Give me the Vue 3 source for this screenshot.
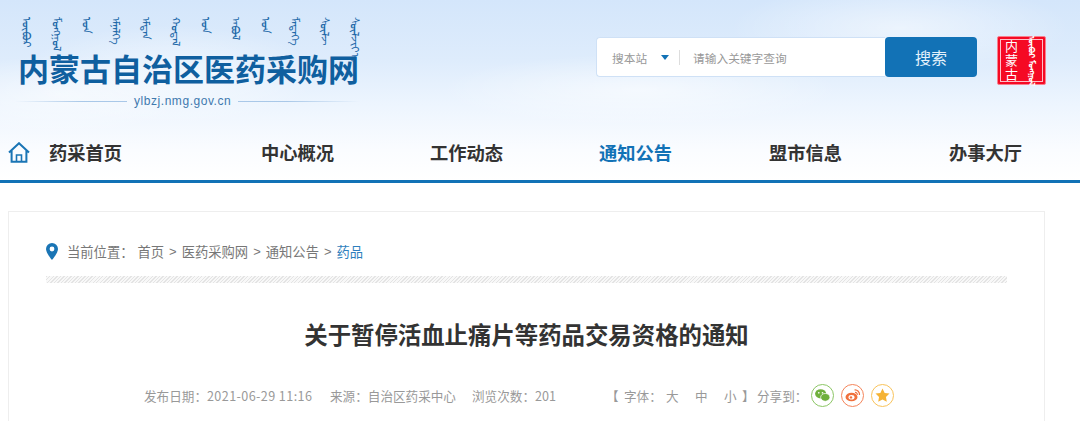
<script setup>
const navItems = [
  { label: '药采首页' },
  { label: '中心概况' },
  { label: '工作动态' },
  { label: '通知公告', active: true },
  { label: '盟市信息' },
  { label: '办事大厅' }
]

const crumbs = ['首页', '医药采购网', '通知公告']
const mongolWords = ['ᠥᠪᠥᠷ', 'ᠮᠣᠩᠭᠣᠯ', 'ᠤᠨ', 'ᠡᠮᠨᠡᠯᠭᠡ', 'ᠡᠮᠲᠠᠨ', 'ᠬᠤᠳᠠᠯ', 'ᠤᠨ', 'ᠠᠪᠤᠯ', 'ᠤᠨ', 'ᠮᠡᠳᠡᠭᠡ', 'ᠰᠦᠯᠵ', 'ᠰᠦᠯᠵᠢᠶ᠎ᠡ']
</script>

<template>
  <div class="page">
    <header class="header">
      <div class="top">
        <div class="logo">
          <div class="mongol">
            <span v-for="(word, i) in mongolWords" :key="i">{{ word }}</span>
          </div>
          <div class="site-name">内蒙古自治区医药采购网</div>
          <div class="site-url"><i></i><span>ylbzj.nmg.gov.cn</span><i></i></div>
        </div>
        <div class="search">
          <div class="search-box">
            <span class="scope">搜本站</span>
            <span class="caret"></span>
            <span class="divider"></span>
            <span class="placeholder">请输入关键字查询</span>
          </div>
          <button class="search-btn">搜索</button>
        </div>
        <div class="seal"><span class="seal-cn">内蒙古</span><span class="seal-mn">ᠥᠪᠥᠷ ᠮᠣᠩᠭᠣᠯ</span></div>
      </div>
      <nav class="nav">
        <svg class="home" viewBox="0 0 22 21" width="22" height="21">
          <path d="M1 10.500 11 1.200l10 9.300M3.600 8.600v11.200h14.800V8.600" fill="none" stroke="#1a75b5" stroke-width="2" />
          <path d="M8.500 19.500v-6.500h5v6.500" fill="none" stroke="#1a75b5" stroke-width="1.600" />
        </svg>
        <a v-for="item in navItems" :key="item.label" :class="{ active: item.active }">{{ item.label }}</a>
      </nav>
    </header>

    <main class="card">
      <div class="crumbs">
        <svg viewBox="0 0 12 17" width="12" height="17">
          <path fill-rule="evenodd" fill="#1a75b5" d="M6 0a6 6 0 0 1 6 6c0 4-6 11-6 11S0 10 0 6a6 6 0 0 1 6-6Zm0 3.600a2.400 2.400 0 1 0 0 4.800a2.400 2.400 0 0 0 0-4.800Z" />
        </svg>
        <span class="here">当前位置：</span>
        <template v-for="c in crumbs" :key="c">
          <span>{{ c }}</span><span class="sep">&gt;</span>
        </template>
        <span class="current">药品</span>
      </div>
      <div class="stripe"></div>
      <h1>关于暂停活血止痛片等药品交易资格的通知</h1>
      <div class="meta">
        <span class="date">发布日期：<span class="num">2021-06-29 11:16</span></span>
        <span class="source">来源：自治区药采中心</span>
        <span class="views">浏览次数：201</span>
        <span class="font-size"><b>【</b><span>字体：</span><em>大</em><em>中</em><em>小</em><b>】</b></span>
        <span class="share-label">分享到：</span>
        <span class="share green">
          <svg viewBox="0 0 16 14" width="15" height="13">
            <ellipse cx="6" cy="5.200" rx="6" ry="5" fill="#6fb03c" />
            <ellipse cx="11" cy="9" rx="5" ry="4.200" fill="#6fb03c" stroke="#fff" stroke-width=".8" />
            <circle cx="4" cy="4" r=".9" fill="#fff" /><circle cx="8" cy="4" r=".9" fill="#fff" />
          </svg>
        </span>
        <span class="share red">
          <svg viewBox="0 0 16 14" width="16" height="14">
            <ellipse cx="6.500" cy="9" rx="6" ry="4.300" fill="#f0703c" />
            <ellipse cx="6.500" cy="9.200" rx="3" ry="2.300" fill="#fff" />
            <circle cx="6" cy="9.400" r="1.200" fill="#f0703c" />
            <path d="M9.500 2a4.500 4.500 0 0 1 5 5M10 4.500a2 2 0 0 1 2.300 2.300" fill="none" stroke="#f0703c" stroke-width="1.200" />
          </svg>
        </span>
        <span class="share yellow">
          <svg viewBox="0 0 16 15" width="15" height="14">
            <path d="m8 .5 2.300 4.800 5.200.7-3.800 3.600.9 5.200L8 12.300l-4.600 2.500.9-5.200L.5 6l5.200-.7Z" fill="#f5b335" />
          </svg>
        </span>
      </div>
    </main>
  </div>
</template>

<style scoped>
.page {
  width: 1080px;
  height: 421px;
  overflow: hidden;
  background: #fff;
  font-family: "Noto Sans CJK SC", "Liberation Sans", sans-serif;
}
.header {
  height: 180px;
  border-bottom: 3px solid #1272b6;
  background:
    radial-gradient(ellipse 150px 50px at 170px 75px, rgba(255, 255, 255, .55), transparent),
    radial-gradient(ellipse 130px 40px at 60px 95px, rgba(255, 255, 255, .5), transparent),
    radial-gradient(ellipse 170px 45px at 900px 28px, rgba(255, 255, 255, .5), transparent),
    radial-gradient(ellipse 200px 36px at 640px 90px, rgba(255, 255, 255, .55), transparent),
    linear-gradient(#d4e6fb 0, #deecfc 60px, #edf5fe 105px, #fafcff 150px, #fff 180px);
}
.top {
  height: 124px;
  display: flex;
  align-items: flex-start;
}
.logo {
  width: 596px;
  padding: 17px 0 0 18px;
  box-sizing: border-box;
}
.mongol {
  height: 35px;
  width: 341px;
  margin-left: 3px;
  display: flex;
  justify-content: space-between;
  align-items: flex-start;
  color: #1d68a8;
  font-size: 11px;
  line-height: 13px;
}
.mongol span {
  writing-mode: vertical-lr;
  white-space: nowrap;
}
.site-name {
  font-size: 31px;
  line-height: 36px;
  font-weight: 700;
  color: #0f5f9f;
  white-space: nowrap;
  margin-top: -2px;
}
.site-url {
  margin: 7px 0 0 -3px;
  width: 345px;
  display: flex;
  align-items: center;
  gap: 7px;
  font: 12px/16px "Liberation Sans", sans-serif;
  letter-spacing: .55px;
  color: #3f79ae;
}
.site-url i {
  flex: 1;
  height: 1px;
  background: linear-gradient(90deg, transparent, #a9c8e8 60%, #a9c8e8);
}
.site-url i:first-child {
  flex: none;
  width: 112px;
}
.site-url i:last-child {
  background: linear-gradient(270deg, transparent, #a9c8e8 60%, #a9c8e8);
}
.search {
  margin-top: 37px;
  width: 381px;
  height: 40px;
  display: flex;
}
.search-box {
  flex: 1;
  display: flex;
  align-items: center;
  background: #fff;
  border: 1px solid #cfe1f6;
  border-right: 0;
  border-radius: 4px 0 0 4px;
  font-size: 11.700px;
  color: #999;
}
.scope {
  margin-left: 15px;
}
.caret {
  margin-left: 14px;
  border: 4px solid transparent;
  border-top: 5px solid #1272b6;
  border-bottom: 0;
}
.divider {
  margin: 0 13px 0 10px;
  width: 1px;
  height: 15px;
  background: #ddd;
}
.search-btn {
  width: 92px;
  border: 0;
  background: #1272b6;
  color: #e4f1fb;
  font: 16px "Noto Sans CJK SC", sans-serif;
  border-radius: 4px;
}
.seal {
  margin: 36px 0 0 20px;
  width: 49px;
  height: 49px;
  box-sizing: border-box;
  background: #f50a24;
  border: 1px solid #f8808e;
  border-radius: 2px;
  outline: 1px solid rgba(255, 255, 255, .75);
  outline-offset: -4px;
  display: flex;
  align-items: center;
  padding-left: 6px;
}
.seal span {
  writing-mode: vertical-rl;
  color: #fff;
  white-space: nowrap;
}
.seal-cn {
  font: 13px/15px "Noto Sans CJK SC", sans-serif;
  letter-spacing: 1px;
}
.seal-mn {
  margin-left: 8px;
  font: 700 7.500px/10px "Noto Sans CJK SC", sans-serif;
}
.nav {
  height: 56px;
  display: grid;
  grid-template-columns: 41px 212px 169px 169px 170px 180px auto;
  align-items: center;
  padding-left: 8px;
}
.nav a {
  font-size: 18.300px;
  font-weight: 700;
  color: #333;
  white-space: nowrap;
}
.nav a.active {
  color: #1272b6;
}
.card {
  margin: 28px 0 0 8px;
  width: 1037px;
  height: 260px;
  box-sizing: border-box;
  border: 1px solid #eee;
  padding: 0 37px;
}
.crumbs {
  margin-top: 29px;
  height: 20px;
  display: flex;
  align-items: center;
  font-size: 13.300px;
  color: #777;
}
.crumbs svg {
  margin-right: 9px;
}
.here {
  margin-right: 4px;
}
.sep {
  margin: 0 5px;
  font-size: 13px;
  font-family: "Liberation Sans", sans-serif;
}
.current {
  color: #2f7fbd;
}
.stripe {
  margin-top: 15px;
  height: 7px;
  background: repeating-linear-gradient(135deg, #e4e4e4 0 1px, #f8f8f8 1px 2.500px);
}
h1 {
  margin: 33px 0 0;
  text-align: center;
  font-size: 23.400px;
  line-height: 36px;
  font-weight: 700;
  color: #333;
}
.meta {
  margin: 31px 0 0 98px;
  height: 24px;
  display: flex;
  align-items: center;
  font-size: 12.600px;
  color: #999;
  white-space: nowrap;
}
.date {
  width: 186px;
}
.num {
  letter-spacing: .4px;
}
.source {
  width: 142px;
}
.views {
  width: 140px;
}
.font-size {
  width: 145px;
  display: flex;
  align-items: center;
}
.font-size b {
  width: 12px;
  font-weight: 400;
}
.font-size b:first-child {
  margin-left: -6px;
  width: 18px;
}
.font-size span {
  width: 42px;
}
.font-size em {
  width: 29px;
  font-style: normal;
}
.font-size em:last-of-type {
  width: 18px;
}
.share-label {
  width: 54px;
}
.share {
  width: 23px;
  height: 23px;
  margin-right: 7px;
  flex: none;
  box-sizing: border-box;
  border: 1px solid;
  border-radius: 50%;
  display: flex;
  align-items: center;
  justify-content: center;
}
.share.green { border-color: #8cc665; }
.share.red { border-color: #f5855a; }
.share.yellow { border-color: #f9c35a; }
</style>
